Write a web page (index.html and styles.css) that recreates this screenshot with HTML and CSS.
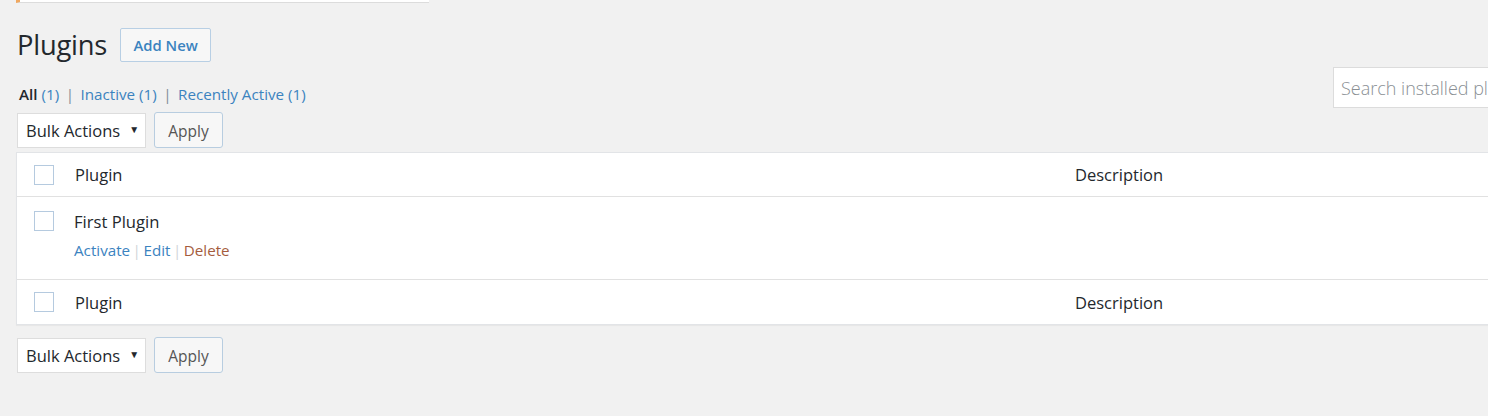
FILE: index.html
```html
<!DOCTYPE html>
<html>
<head>
<meta charset="utf-8">
<link rel="stylesheet" href="styles.css">
</head>
<body>
<div class="wrap">
  <div class="notice"></div>
  <div class="title-row">
    <h1 class="title">Plugins</h1>
    <a class="add-new">Add New</a>
  </div>
  <div class="filters">
    <ul class="subsubsub">
      <li><a class="current">All <span class="count">(1)</span></a><span class="sep">|</span></li>
      <li><a>Inactive <span class="count">(1)</span></a><span class="sep">|</span></li>
      <li><a>Recently Active <span class="count">(1)</span></a></li>
    </ul>
    <div class="search"><span class="placeholder">Search installed plugins...</span></div>
  </div>
  <div class="tablenav">
    <div class="select">Bulk Actions <span class="arrow">▼</span></div>
    <button class="button">Apply</button>
  </div>
  <div class="table">
    <div class="row head">
      <div class="cb"><span class="check"></span></div>
      <div class="name">Plugin</div>
      <div class="desc">Description</div>
    </div>
    <div class="row plugin">
      <div class="cb"><span class="check"></span></div>
      <div class="name">
        <div class="plugin-title">First Plugin</div>
        <div class="actions"><a>Activate</a><span class="bar">|</span><a>Edit</a><span class="bar">|</span><a class="delete">Delete</a></div>
      </div>
      <div class="desc"></div>
    </div>
    <div class="row foot">
      <div class="cb"><span class="check"></span></div>
      <div class="name">Plugin</div>
      <div class="desc">Description</div>
    </div>
  </div>
  <div class="tablenav bottom">
    <div class="select">Bulk Actions <span class="arrow">▼</span></div>
    <button class="button">Apply</button>
  </div>
</div>
</body>
</html>
```

FILE: styles.css
```css
html, body {
  margin: 0;
  padding: 0;
  background: #f1f1f1;
  overflow: hidden;
}
body {
  font-family: "Open Sans", "Noto Sans", sans-serif;
  color: #23282d;
  height: 416px;
}
.wrap {
  margin-left: 16px;
  width: 1500px;
}
.notice {
  width: 409px;
  height: 2px;
  background: #fff;
  border-left: 4px solid #f0a860;
  border-bottom: 1px solid #dcdcdc;
}
.title-row {
  display: flex;
  align-items: center;
  margin-top: 25px;
  height: 34px;
}
.title {
  margin: 0 0 0 1px;
  font-size: 27.3px;
  font-weight: 400;
  line-height: 34px;
  color: #23282d;
  letter-spacing: -0.2px;
}
.add-new {
  margin-left: 13px;
  box-sizing: border-box;
  width: 91px;
  height: 34px;
  border: 1px solid #b8cfe4;
  border-radius: 2px;
  background: #f7f7f7;
  color: #3b83bf;
  font-weight: 600;
  font-size: 14.8px;
  display: flex;
  align-items: center;
  justify-content: center;
}
.filters {
  display: flex;
  margin-top: 5px;
  height: 40px;
}
.subsubsub {
  list-style: none;
  margin: 17px 0 0 3px;
  padding: 0;
  display: flex;
  font-size: 15.2px;
  line-height: 20px;
}
.subsubsub a {
  color: #3b83bf;
}
.subsubsub a.current {
  color: #23282d;
  font-weight: 600;
}
.subsubsub a.current .count {
  color: #3b83bf;
  font-weight: 400;
}
.sep {
  color: #7d8a96;
  margin: 0 6.5px 0 6.5px;
}
.search {
  margin-left: auto;
  box-sizing: border-box;
  width: 183px;
  height: 41px;
  background: #fff;
  border: 1px solid #dcdcdc;
  overflow: hidden;
  white-space: nowrap;
  padding-left: 7px;
  display: flex;
  align-items: center;
}
.placeholder {
  color: #8a8f94;
  font-size: 18px;
  font-weight: 300;
}
.tablenav {
  display: flex;
  align-items: center;
  gap: 8px;
  margin-top: 5px;
  margin-left: 1px;
  height: 36px;
}
.select {
  box-sizing: border-box;
  width: 129px;
  height: 35px;
  background: #fff;
  border: 1px solid #dddddd;
  display: flex;
  align-items: center;
  padding-left: 8px;
  font-size: 16.5px;
  color: #23282d;
  white-space: nowrap;
}
.arrow {
  font-size: 10px;
  margin-left: 9px;
  margin-top: -3px;
}
.button {
  box-sizing: border-box;
  width: 69px;
  height: 36px;
  border: 1px solid #b8cde0;
  border-radius: 3px;
  background: #f7f7f7;
  font-family: inherit;
  font-size: 15.5px;
  color: #555;
  padding: 2px 0 0 0;
}
.table {
  margin-top: 4px;
  margin-left: 0;
  background: #fff;
  border: 1px solid #e2e4e7;
  box-shadow: 0 1px 1px rgba(0,0,0,0.04);
}
.row {
  display: flex;
  font-size: 16.5px;
}
.row.head {
  height: 43px;
  border-bottom: 1px solid #e1e1e1;
  align-items: center;
}
.row.plugin {
  height: 82px;
  border-bottom: 1px solid #e1e1e1;
}
.row.foot {
  height: 44px;
  align-items: center;
}
.cb {
  width: 58px;
  box-sizing: border-box;
  padding-left: 17px;
  display: flex;
}
.check {
  box-sizing: border-box;
  width: 20px;
  height: 20px;
  border: 1px solid #b5cadf;
  background: #fff;
}
.row.plugin .cb {
  padding-top: 14px;
}
.name {
  width: 1000px;
}
.row.plugin .name {
  padding-top: 13px;
  margin-left: -1px;
}
.plugin-title {
  font-size: 16.6px;
  line-height: 24px;
}
.actions {
  font-size: 15.2px;
  line-height: 20px;
  margin-top: 6px;
  display: flex;
}
.actions a {
  color: #3b83bf;
}
.actions a.delete {
  color: #a55c3e;
}
.bar {
  color: #d0d4d8;
  margin: 0 2.5px;
}
.tablenav.bottom {
  margin-top: 12px;
}
```
